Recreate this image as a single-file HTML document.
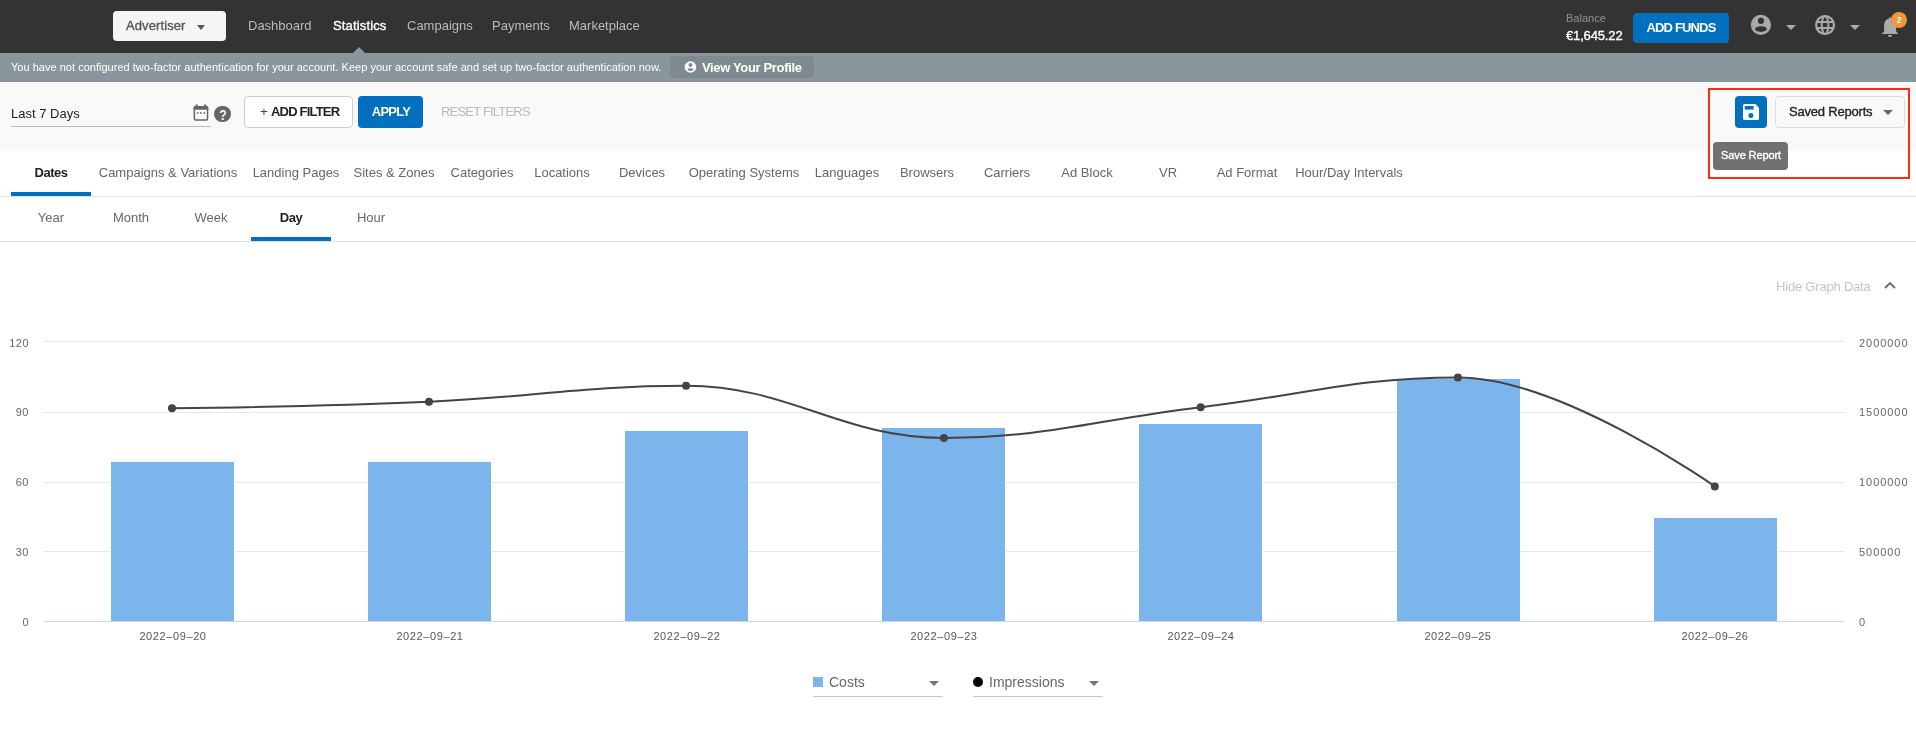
<!DOCTYPE html>
<html><head><meta charset="utf-8"><title>Statistics</title>
<style>
html,body{margin:0;padding:0;}
body{width:1916px;height:753px;position:relative;overflow:hidden;background:#fff;font-family:"Liberation Sans",sans-serif;}
.t{position:absolute;white-space:nowrap;will-change:transform;}
</style></head><body>
<div style="position:absolute;left:0px;top:0px;width:1916px;height:53px;background:#333;"></div>
<div style="position:absolute;left:0px;top:53px;width:1916px;height:29px;background:#8b969c;"></div>
<div style="position:absolute;left:0px;top:82px;width:1916px;height:69px;background:#f9f9f9;"></div>
<div style="position:absolute;left:0px;top:196px;width:1916px;height:1px;background:#e0e0e0;"></div>
<div style="position:absolute;left:0px;top:241px;width:1916px;height:1px;background:#e0e0e0;"></div>
<div style="position:absolute;left:113px;top:11px;width:113px;height:30px;background:#f5f5f5;border-radius:4px;"></div>
<div class="t" style="left:126.00px;top:18.99px;font-size:13px;line-height:13px;font-weight:400;color:#555;letter-spacing:0.1px;-webkit-text-stroke:0.35px #555;">Advertiser</div>
<div style="position:absolute;left:196.5px;top:25px;width:0;height:0;border-left:4.7px solid transparent;border-right:4.7px solid transparent;border-top:5px solid #555;"></div>
<div class="t" style="left:248.00px;top:18.99px;font-size:13px;line-height:13px;font-weight:400;color:#bbb;">Dashboard</div>
<div class="t" style="left:407.00px;top:18.99px;font-size:13px;line-height:13px;font-weight:400;color:#bbb;">Campaigns</div>
<div class="t" style="left:492.00px;top:18.99px;font-size:13px;line-height:13px;font-weight:400;color:#bbb;">Payments</div>
<div class="t" style="left:569.00px;top:18.99px;font-size:13px;line-height:13px;font-weight:400;color:#bbb;">Marketplace</div>
<div class="t" style="left:332.50px;top:18.99px;font-size:13px;line-height:13px;font-weight:400;color:#fff;letter-spacing:0.15px;-webkit-text-stroke:0.35px #fff;">Statistics</div>
<div style="position:absolute;left:353px;top:47px;width:0;height:0;border-left:6px solid transparent;border-right:6px solid transparent;border-bottom:6px solid #8b969c;"></div>
<div class="t" style="left:1566.00px;top:12.69px;font-size:11px;line-height:11px;font-weight:400;color:#8b969c;">Balance</div>
<div class="t" style="left:1566.00px;top:28.99px;font-size:13px;line-height:13px;font-weight:400;color:#fff;letter-spacing:-0.15px;-webkit-text-stroke:0.35px #fff;">€1,645.22</div>
<div style="position:absolute;left:1633px;top:13px;width:96px;height:30px;background:#0070bf;border-radius:4px;"></div>
<div class="t" style="left:1381.00px;width:600px;text-align:center;top:20.99px;font-size:13px;line-height:13px;font-weight:700;color:#fff;letter-spacing:-0.85px;">ADD FUNDS</div>
<svg style="position:absolute;left:1750px;top:14px" width="22" height="22" viewBox="0 0 22 22">
<circle cx="10.9" cy="10.95" r="10.1" fill="#aaa"/>
<circle cx="10.95" cy="6.85" r="3.1" fill="#333"/>
<ellipse cx="10.95" cy="15.1" rx="5.95" ry="2.8" fill="#333"/>
</svg>
<div style="position:absolute;left:1786px;top:25px;width:0;height:0;border-left:5px solid transparent;border-right:5px solid transparent;border-top:5.5px solid #aaa;"></div>
<svg style="position:absolute;left:1814px;top:14px" width="22" height="22" viewBox="0 0 22 22" fill="none" stroke="#aaa" stroke-width="2">
<defs><clipPath id="gc"><circle cx="11.05" cy="11.05" r="9"/></clipPath></defs>
<circle cx="11.05" cy="11.05" r="8.95" stroke-width="2.2"/>
<ellipse cx="11.05" cy="11.05" rx="3.3" ry="8.95"/>
<g clip-path="url(#gc)"><line x1="1" y1="7.95" x2="21" y2="7.95"/><line x1="1" y1="13.9" x2="21" y2="13.9"/></g>
</svg>
<div style="position:absolute;left:1850px;top:25px;width:0;height:0;border-left:5px solid transparent;border-right:5px solid transparent;border-top:5.5px solid #aaa;"></div>
<svg style="position:absolute;left:1881px;top:16px" width="20" height="23" viewBox="0 0 20 23">
<path d="M8.2 2.4 Q8.2 1 9.05 1 Q9.9 1 9.9 2.4 C13 3 15.1 5.5 15.1 9 V15.5 L17.2 17.4 V18 H0.9 V17.4 L3.1 15.5 V9 C3.1 5.5 5.1 3 8.2 2.4 Z" fill="#aaa"/>
<path d="M6.9 19.1 H11.1 Q11.1 21 9 21 Q6.9 21 6.9 19.1 Z" fill="#aaa"/>
</svg>
<div style="position:absolute;left:1891px;top:12px;width:16px;height:16px;border-radius:50%;background:#f0973f;"></div>
<div class="t" style="left:1599.10px;width:600px;text-align:center;top:15.80px;font-size:8.5px;line-height:8.5px;font-weight:700;color:#fff;">2</div>
<div class="t" style="left:11.00px;top:61.69px;font-size:11px;line-height:11px;font-weight:400;color:#fff;letter-spacing:0.02px;">You have not configured two-factor authentication for your account. Keep your account safe and set up two-factor authentication now.</div>
<div style="position:absolute;left:670px;top:56px;width:144px;height:22px;background:#7f8a90;border-radius:4px;"></div>
<svg style="position:absolute;left:684px;top:61px" width="13" height="13" viewBox="0 0 13 13">
<circle cx="6.45" cy="6" r="5.8" fill="#fff"/>
<circle cx="6.45" cy="4.1" r="2" fill="#7f8a90"/>
<ellipse cx="6.45" cy="8.6" rx="3" ry="1.35" fill="#7f8a90"/>
</svg>
<div class="t" style="left:702.00px;top:60.99px;font-size:13px;line-height:13px;font-weight:700;color:#fff;letter-spacing:-0.35px;">View Your Profile</div>
<div class="t" style="left:11.00px;top:106.99px;font-size:13px;line-height:13px;font-weight:400;color:#222;">Last 7 Days</div>
<div style="position:absolute;left:11px;top:126px;width:200px;height:1px;background:#bbb;"></div>
<svg style="position:absolute;left:193px;top:104px" width="16" height="18" viewBox="0 0 16 18">
<rect x="1.33" y="2.85" width="13.2" height="13.2" rx="1.3" fill="none" stroke="#666" stroke-width="1.5"/>
<path d="M0.58 5.85 V3.6 Q0.58 2.1 2.08 2.1 H13.78 Q15.28 2.1 15.28 3.6 V5.85 Z" fill="#666"/>
<rect x="2.6" y="0.5" width="2.2" height="2.5" fill="#666"/>
<rect x="11" y="0.5" width="2.2" height="2.5" fill="#666"/>
<rect x="3.8" y="8.2" width="1.6" height="1.6" fill="#666"/>
<rect x="7.1" y="8.2" width="1.6" height="1.6" fill="#666"/>
<rect x="10.5" y="8.2" width="1.6" height="1.6" fill="#666"/>
</svg>
<div style="position:absolute;left:214.2px;top:105.7px;width:16.5px;height:16.5px;border-radius:50%;background:#666;"></div>
<div class="t" style="left:-77.40px;width:600px;text-align:center;top:107.18px;font-size:15.5px;line-height:15.5px;font-weight:700;color:#fff;transform:scaleX(0.8);">?</div>
<div style="position:absolute;left:244px;top:96px;width:107px;height:30px;background:#fff;border:1px solid #ccc;border-radius:4px;"></div>
<div class="t" style="left:-36.20px;width:600px;text-align:center;top:105.37px;font-size:13.5px;line-height:13.5px;font-weight:400;color:#444;">+</div>
<div class="t" style="left:270.50px;top:104.99px;font-size:13px;line-height:13px;font-weight:700;color:#222;letter-spacing:-0.8px;">ADD FILTER</div>
<div style="position:absolute;left:358px;top:96px;width:65px;height:32px;background:#0070bf;border-radius:4px;"></div>
<div class="t" style="left:90.50px;width:600px;text-align:center;top:104.99px;font-size:13px;line-height:13px;font-weight:700;color:#fff;letter-spacing:-0.75px;">APPLY</div>
<div class="t" style="left:441.00px;top:104.99px;font-size:13px;line-height:13px;font-weight:400;color:#bbb;letter-spacing:-0.8px;">RESET FILTERS</div>
<div style="position:absolute;left:1735px;top:96px;width:32px;height:32px;background:#0070bf;border-radius:4px;"></div>
<svg style="position:absolute;left:1742.5px;top:104.2px" width="16" height="16" viewBox="0 0 16 16">
<path d="M1.5 0 H12.3 L16 3.7 V14.5 Q16 16 14.5 16 H1.5 Q0 16 0 14.5 V1.5 Q0 0 1.5 0 Z" fill="#fff"/>
<rect x="1.7" y="2" width="8.9" height="3.6" fill="#0070bf"/>
<circle cx="7.9" cy="11.6" r="2.5" fill="#0070bf"/>
</svg>
<div style="position:absolute;left:1775px;top:96px;width:128px;height:30px;background:#f9f9f9;border:1px solid #ddd;border-radius:4px;"></div>
<div class="t" style="left:1789.00px;top:104.99px;font-size:13px;line-height:13px;font-weight:400;color:#222;letter-spacing:-0.2px;-webkit-text-stroke:0.35px #222;">Saved Reports</div>
<div style="position:absolute;left:1883px;top:110px;width:0;height:0;border-left:5px solid transparent;border-right:5px solid transparent;border-top:5px solid #666;"></div>
<div style="position:absolute;left:1713px;top:142px;width:75px;height:28px;background:#717171;border-radius:4px;"></div>
<div class="t" style="left:1450.80px;width:600px;text-align:center;top:150.19px;font-size:11px;line-height:11px;font-weight:400;color:#fff;letter-spacing:-0.12px;-webkit-text-stroke:0.35px #fff;">Save Report</div>
<div style="position:absolute;left:1708px;top:88px;width:198px;height:87px;border:2px solid #ff2a12;"></div>
<div class="t" style="left:-249.00px;width:600px;text-align:center;top:165.99px;font-size:13px;line-height:13px;font-weight:700;color:#222;letter-spacing:-0.5px;">Dates</div>
<div class="t" style="left:-131.70px;width:600px;text-align:center;top:165.99px;font-size:13px;line-height:13px;font-weight:400;color:#666;">Campaigns &amp; Variations</div>
<div class="t" style="left:-4.00px;width:600px;text-align:center;top:165.99px;font-size:13px;line-height:13px;font-weight:400;color:#666;">Landing Pages</div>
<div class="t" style="left:94.20px;width:600px;text-align:center;top:165.99px;font-size:13px;line-height:13px;font-weight:400;color:#666;">Sites &amp; Zones</div>
<div class="t" style="left:182.00px;width:600px;text-align:center;top:165.99px;font-size:13px;line-height:13px;font-weight:400;color:#666;">Categories</div>
<div class="t" style="left:261.80px;width:600px;text-align:center;top:165.99px;font-size:13px;line-height:13px;font-weight:400;color:#666;">Locations</div>
<div class="t" style="left:341.85px;width:600px;text-align:center;top:165.99px;font-size:13px;line-height:13px;font-weight:400;color:#666;">Devices</div>
<div class="t" style="left:444.40px;width:600px;text-align:center;top:165.99px;font-size:13px;line-height:13px;font-weight:400;color:#666;">Operating Systems</div>
<div class="t" style="left:547.20px;width:600px;text-align:center;top:165.99px;font-size:13px;line-height:13px;font-weight:400;color:#666;">Languages</div>
<div class="t" style="left:627.20px;width:600px;text-align:center;top:165.99px;font-size:13px;line-height:13px;font-weight:400;color:#666;">Browsers</div>
<div class="t" style="left:707.00px;width:600px;text-align:center;top:165.99px;font-size:13px;line-height:13px;font-weight:400;color:#666;">Carriers</div>
<div class="t" style="left:787.00px;width:600px;text-align:center;top:165.99px;font-size:13px;line-height:13px;font-weight:400;color:#666;">Ad Block</div>
<div class="t" style="left:867.50px;width:600px;text-align:center;top:165.99px;font-size:13px;line-height:13px;font-weight:400;color:#666;">VR</div>
<div class="t" style="left:947.20px;width:600px;text-align:center;top:165.99px;font-size:13px;line-height:13px;font-weight:400;color:#666;">Ad Format</div>
<div class="t" style="left:1049.00px;width:600px;text-align:center;top:165.99px;font-size:13px;line-height:13px;font-weight:400;color:#666;">Hour/Day Intervals</div>
<div style="position:absolute;left:11px;top:192px;width:80px;height:4px;background:#0070bf;"></div>
<div class="t" style="left:-249.00px;width:600px;text-align:center;top:210.99px;font-size:13px;line-height:13px;font-weight:400;color:#666;">Year</div>
<div class="t" style="left:-169.00px;width:600px;text-align:center;top:210.99px;font-size:13px;line-height:13px;font-weight:400;color:#666;">Month</div>
<div class="t" style="left:-89.00px;width:600px;text-align:center;top:210.99px;font-size:13px;line-height:13px;font-weight:400;color:#666;">Week</div>
<div class="t" style="left:-9.00px;width:600px;text-align:center;top:210.99px;font-size:13px;line-height:13px;font-weight:700;color:#222;letter-spacing:-0.4px;">Day</div>
<div class="t" style="left:71.00px;width:600px;text-align:center;top:210.99px;font-size:13px;line-height:13px;font-weight:400;color:#666;">Hour</div>
<div style="position:absolute;left:251px;top:237px;width:80px;height:4px;background:#0070bf;"></div>
<div class="t" style="left:1775.50px;top:279.99px;font-size:13px;line-height:13px;font-weight:400;color:#c4c4c4;letter-spacing:-0.2px;">Hide Graph Data</div>
<svg style="position:absolute;left:1883px;top:280px" width="14" height="10" viewBox="0 0 14 10"><path d="M2 8 L7 3 L12 8" fill="none" stroke="#6e6e6e" stroke-width="1.9"/></svg>
<svg style="position:absolute;left:0;top:0" width="1916" height="753" viewBox="0 0 1916 753">
<rect x="44" y="341" width="1800" height="1" fill="#e6e6e6"/>
<rect x="44" y="412" width="1800" height="1" fill="#e6e6e6"/>
<rect x="44" y="482" width="1800" height="1" fill="#e6e6e6"/>
<rect x="44" y="551" width="1800" height="1" fill="#e6e6e6"/>
<rect x="44" y="621" width="1800" height="1" fill="#ccd6eb"/>
<rect x="110" y="461" width="125" height="160" fill="#fff"/>
<rect x="111" y="462" width="123" height="159" fill="#7cb5ec"/>
<rect x="367" y="461" width="125" height="160" fill="#fff"/>
<rect x="368" y="462" width="123" height="159" fill="#7cb5ec"/>
<rect x="624" y="430" width="125" height="191" fill="#fff"/>
<rect x="625" y="431" width="123" height="190" fill="#7cb5ec"/>
<rect x="881" y="427" width="125" height="194" fill="#fff"/>
<rect x="882" y="428" width="123" height="193" fill="#7cb5ec"/>
<rect x="1138" y="423" width="125" height="198" fill="#fff"/>
<rect x="1139" y="424" width="123" height="197" fill="#7cb5ec"/>
<rect x="1396" y="378" width="125" height="243" fill="#fff"/>
<rect x="1397" y="379" width="123" height="242" fill="#7cb5ec"/>
<rect x="1653" y="517" width="125" height="104" fill="#fff"/>
<rect x="1654" y="518" width="123" height="103" fill="#7cb5ec"/>
<path d="M 172 408.3 C 172.00 408.30 326.20 406.22 429.00 401.70 C 531.84 397.18 583.26 385.70 686.10 385.70 C 789.22 385.70 840.78 437.90 943.90 437.90 C 1046.62 437.90 1097.98 419.29 1200.70 407.20 C 1303.58 395.09 1355.02 377.40 1457.90 377.40 C 1560.66 377.40 1714.80 486.40 1714.80 486.40" fill="none" stroke="#434348" stroke-width="2"/>
<circle cx="172" cy="408.3" r="4" fill="#434348"/>
<circle cx="429" cy="401.7" r="4" fill="#434348"/>
<circle cx="686.1" cy="385.7" r="4" fill="#434348"/>
<circle cx="943.9" cy="437.9" r="4" fill="#434348"/>
<circle cx="1200.7" cy="407.2" r="4" fill="#434348"/>
<circle cx="1457.9" cy="377.4" r="4" fill="#434348"/>
<circle cx="1714.8" cy="486.4" r="4" fill="#434348"/>
</svg>
<div class="t" style="left:-571.50px;width:600px;text-align:right;top:337.69px;font-size:11px;line-height:11px;font-weight:400;color:#666;letter-spacing:0.5px;">120</div>
<div class="t" style="left:-571.50px;width:600px;text-align:right;top:406.99px;font-size:11px;line-height:11px;font-weight:400;color:#666;letter-spacing:0.5px;">90</div>
<div class="t" style="left:-571.50px;width:600px;text-align:right;top:476.99px;font-size:11px;line-height:11px;font-weight:400;color:#666;letter-spacing:0.5px;">60</div>
<div class="t" style="left:-571.50px;width:600px;text-align:right;top:546.99px;font-size:11px;line-height:11px;font-weight:400;color:#666;letter-spacing:0.5px;">30</div>
<div class="t" style="left:-571.50px;width:600px;text-align:right;top:616.99px;font-size:11px;line-height:11px;font-weight:400;color:#666;letter-spacing:0.5px;">0</div>
<div class="t" style="left:1859.00px;top:337.69px;font-size:11px;line-height:11px;font-weight:400;color:#666;letter-spacing:0.95px;">2000000</div>
<div class="t" style="left:1859.00px;top:406.99px;font-size:11px;line-height:11px;font-weight:400;color:#666;letter-spacing:0.95px;">1500000</div>
<div class="t" style="left:1859.00px;top:476.99px;font-size:11px;line-height:11px;font-weight:400;color:#666;letter-spacing:0.95px;">1000000</div>
<div class="t" style="left:1859.00px;top:546.99px;font-size:11px;line-height:11px;font-weight:400;color:#666;letter-spacing:0.95px;">500000</div>
<div class="t" style="left:1859.00px;top:616.99px;font-size:11px;line-height:11px;font-weight:400;color:#666;letter-spacing:0.95px;">0</div>
<div class="t" style="left:-127.43px;width:600px;text-align:center;top:630.69px;font-size:11px;line-height:11px;font-weight:400;color:#555;letter-spacing:0.6px;">2022–09–20</div>
<div class="t" style="left:129.71px;width:600px;text-align:center;top:630.69px;font-size:11px;line-height:11px;font-weight:400;color:#555;letter-spacing:0.6px;">2022–09–21</div>
<div class="t" style="left:386.85px;width:600px;text-align:center;top:630.69px;font-size:11px;line-height:11px;font-weight:400;color:#555;letter-spacing:0.6px;">2022–09–22</div>
<div class="t" style="left:643.99px;width:600px;text-align:center;top:630.69px;font-size:11px;line-height:11px;font-weight:400;color:#555;letter-spacing:0.6px;">2022–09–23</div>
<div class="t" style="left:901.13px;width:600px;text-align:center;top:630.69px;font-size:11px;line-height:11px;font-weight:400;color:#555;letter-spacing:0.6px;">2022–09–24</div>
<div class="t" style="left:1158.27px;width:600px;text-align:center;top:630.69px;font-size:11px;line-height:11px;font-weight:400;color:#555;letter-spacing:0.6px;">2022–09–25</div>
<div class="t" style="left:1415.41px;width:600px;text-align:center;top:630.69px;font-size:11px;line-height:11px;font-weight:400;color:#555;letter-spacing:0.6px;">2022–09–26</div>
<div style="position:absolute;left:813px;top:677px;width:10px;height:10px;background:#7cb5ec;"></div>
<div class="t" style="left:828.50px;top:675.15px;font-size:14px;line-height:14px;font-weight:400;color:#666;">Costs</div>
<div style="position:absolute;left:929px;top:681px;width:0;height:0;border-left:5px solid transparent;border-right:5px solid transparent;border-top:5px solid #777;"></div>
<div style="position:absolute;left:813px;top:696px;width:130px;height:1px;background:#c8c8c8;"></div>
<div style="position:absolute;left:973px;top:677px;width:10px;height:10px;border-radius:50%;background:#000;"></div>
<div class="t" style="left:988.50px;top:675.15px;font-size:14px;line-height:14px;font-weight:400;color:#666;">Impressions</div>
<div style="position:absolute;left:1089px;top:681px;width:0;height:0;border-left:5px solid transparent;border-right:5px solid transparent;border-top:5px solid #777;"></div>
<div style="position:absolute;left:973px;top:696px;width:130px;height:1px;background:#c8c8c8;"></div>
</body></html>
